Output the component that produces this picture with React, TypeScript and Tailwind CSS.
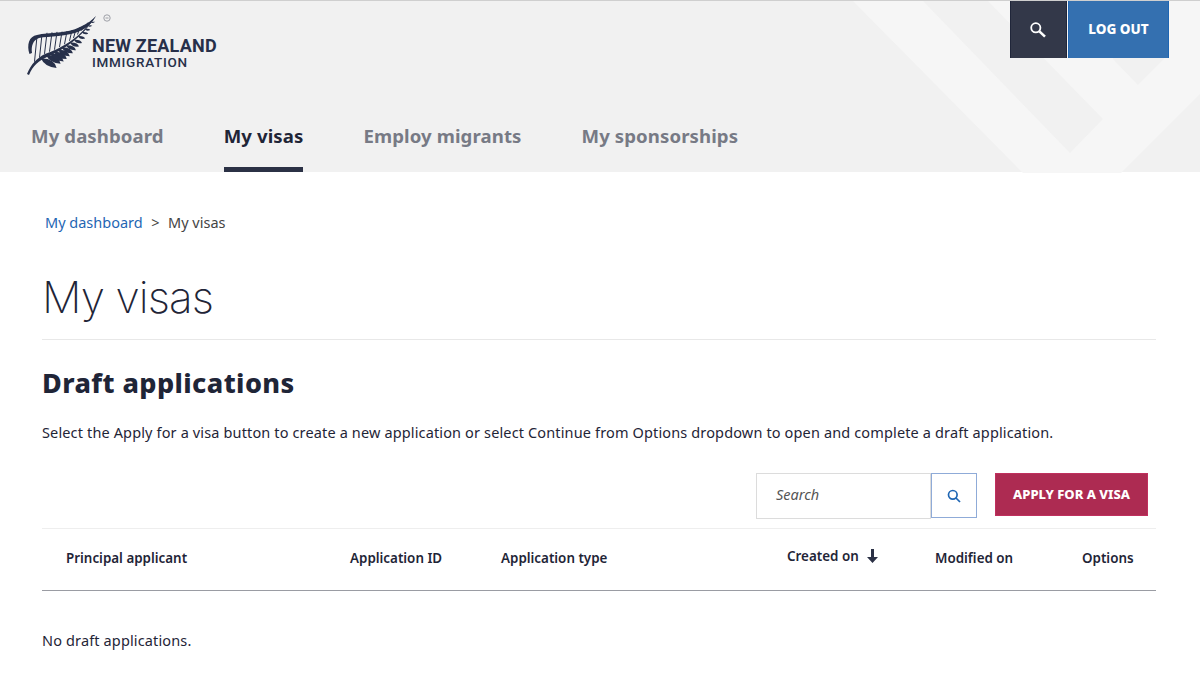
const navItems = [
  { label: 'My dashboard', active: false },
  { label: 'My visas', active: true },
  { label: 'Employ migrants', active: false },
  { label: 'My sponsorships', active: false },
];

function HeaderPattern() {
  return (
    <svg className="absolute inset-0 h-[172px] w-[1200px]" viewBox="0 0 1200 172" aria-hidden="true">
      <polygon
        fill="#f6f6f6"
        points="853,0 923,0 1070,152 1103,118 988,0 1200,0 1200,93 1121,172 1023,172"
      />
      <polygon fill="#f1f1f1" points="1113,58 1138,84 1164,58 1164,40 1113,40" />
    </svg>
  );
}

// rough curves of the fern, x -> y in the logo's own coordinates
const lerp = (pts: number[][], x: number) => {
  for (let i = 0; i < pts.length - 1; i++) {
    if (x <= pts[i + 1][0]) {
      const t = (x - pts[i][0]) / (pts[i + 1][0] - pts[i][0]);
      return pts[i][1] + (pts[i + 1][1] - pts[i][1]) * t;
    }
  }
  return pts[pts.length - 1][1];
};
const stem = [[3, 61], [10, 51], [20, 43.5], [30, 39.5], [40, 34], [50, 27], [60, 17], [71, 4]];
const arc = [[10, 25], [20, 21], [30, 20], [40, 19.5], [50, 17.5], [60, 13], [71, 4]];
const ribs = [12, 17, 22, 27, 32, 37, 42, 47, 51, 55, 59, 63];
const leaves = [16, 21, 25, 29, 33, 37, 41, 45, 49, 53, 57, 60, 63, 66];

function FernLogo() {
  return (
    <svg className="h-[65px] w-[88px] shrink-0" viewBox="0 0 88 65" aria-hidden="true">
      <path d="M2 62 C6 52 12 46 20 42 C34 37 52 29 71 4 C56 27 38 38 22 45 C14 49 8 53 4 63 Z" fill="#27304a" />
      <path d="M4.5 42 C1.5 33 4 24 12 23 C24 20 42 22 55 15 C62 12 67 8 71 4 C67 11 62 16 55 19 C42 25 24 24 14 26 C8 28 6 34 7 41 Z" fill="#27304a" />
      {ribs.map((x) => (
        <line
          key={x}
          x1={x}
          y1={lerp(arc, x)}
          x2={x - 2.5}
          y2={lerp(stem, Math.max(x - 2.5, 3)) - 2}
          stroke="#27304a"
          strokeWidth="1"
        />
      ))}
      {leaves.map((x, i) => {
        const y = lerp(stem, x);
        const len = Math.max(19 - i * 1.15, 5);
        const ex = x + len * 0.82;
        const ey = y + len * 0.5 - i * 0.2;
        return (
          <path
            key={x}
            d={`M${x} ${y} Q${x + len * 0.7} ${y - 0.5} ${ex} ${ey} Q${x + len * 0.2} ${y + len * 0.45} ${x} ${y} Z`}
            fill="#27304a"
          />
        );
      })}
      <circle cx="82" cy="6" r="3.2" fill="none" stroke="#8a8d96" strokeWidth="0.8" />
      <path d="M80.5 6 H83.5" stroke="#8a8d96" strokeWidth="0.8" />
    </svg>
  );
}

export default function App() {
  return (
    <div className="min-h-[687px] w-[1200px] overflow-hidden bg-white font-['Noto_Sans',sans-serif] text-[#1f2537]">
      <header className="relative h-[172px] border-t border-[#cfcfcf] bg-[#f1f1f1]">
        <HeaderPattern />
        <div className="relative flex h-[58px] items-start justify-between pr-[31px]">
          <div className="flex items-start pl-[25px] pt-[11px]">
            <FernLogo />
            <div className="-ml-[21px] pt-[25px] font-['Roboto',sans-serif] text-[#27304a]">
              <div className="text-[18px] leading-[18px] font-bold tracking-[0.2px]">NEW ZEALAND</div>
              <div className="text-[13.5px] leading-[15px] font-medium tracking-[0.7px]">IMMIGRATION</div>
            </div>
          </div>
          <div className="flex gap-px">
            <button className="flex h-[57px] w-[57px] items-center justify-center border-x border-[#20263a] bg-[#333849] pr-[2px]">
              <svg className="h-[18px] w-[18px]" viewBox="0 0 18 18" fill="none" stroke="#ffffff" aria-hidden="true">
                <circle cx="6.8" cy="6.8" r="4.6" strokeWidth="1.8" />
                <path d="M10.4 10.4 L16 15.6" strokeWidth="2.6" />
              </svg>
            </button>
            <button className="h-[57px] w-[101px] border-x border-[#1f66b3] bg-[#3470b0] text-[13.5px] font-extrabold text-white">LOG OUT</button>
          </div>
        </div>
        <nav className="relative mt-[54px] flex gap-[60px] pl-[31px]">
          {navItems.map((item) => (
            <a
              key={item.label}
              className={
                item.active
                  ? 'h-[59px] border-b-[5px] border-[#2b3145] pt-[9px] text-[18.6px] font-bold tracking-[0.1px] text-[#1f2537]'
                  : 'h-[59px] pt-[9px] text-[18.6px] font-bold tracking-[0.1px] text-[#777a85]'
              }
            >
              {item.label}
            </a>
          ))}
        </nav>
      </header>

      <main className="px-[42px]">
        <div className="flex gap-[8.5px] pl-[3px] pt-[40px] text-[14.5px] leading-[20px]">
          <a className="text-[#1f66b3]">My dashboard</a>
          <span className="text-[#444]">&gt;</span>
          <span className="text-[#444]">My visas</span>
        </div>

        <h1 className="mt-[38px] h-[70px] w-[1114px] border-b border-[#e8e8e8] pt-[2px] font-['Inter',sans-serif] text-[44px] leading-[50px] font-extralight tracking-[-0.9px] text-[#1f2537]">
          My visas
        </h1>

        <h2 className="mt-[23px] text-[27px] leading-[40px] font-extrabold tracking-[0.42px] text-[#1f2537]">Draft applications</h2>
        <p className="mt-[19px] text-[14.5px] leading-[20px] tracking-[0.14px] text-[#1f2537]">
          Select the Apply for a visa button to create a new application or select Continue from Options dropdown to open and complete a draft application.
        </p>

        <div className="mt-[31px] flex w-[1106px] items-start justify-end">
          <div className="flex h-[46px] w-[175px] items-center border border-[#dcdcdc] pb-[2px] pl-[19px] text-[14.5px] text-[#555] italic">Search</div>
          <button className="flex h-[45px] w-[46px] items-center justify-center border border-[#8fabd8] bg-white">
            <svg className="h-[14px] w-[14px]" viewBox="0 0 14 14" fill="none" stroke="#1f66b3" strokeWidth="1.7" aria-hidden="true">
              <circle cx="5.8" cy="5.8" r="4.3" />
              <path d="M9 9 L13 13" />
            </svg>
          </button>
          <button className="ml-[18px] h-[43px] w-[153px] border border-[#c0305e] bg-[#ad2b52] text-[13px] font-extrabold text-white">APPLY FOR A VISA</button>
        </div>

        <div className="mt-[9px] flex h-[63px] w-[1114px] items-center border-y border-t-[#eeeeee] border-b-[#9a9ca3] pb-[2px] text-[13.4px] font-semibold text-[#1f2537]">
          <span className="ml-[24px] w-[284px]">Principal applicant</span>
          <span className="w-[151px]">Application ID</span>
          <span className="w-[286px]">Application type</span>
          <span className="-mt-[5px] flex w-[148px] items-center gap-[8px]">
            Created on
            <svg className="h-[14px] w-[11px]" viewBox="0 0 11 14" fill="#2b3145" aria-hidden="true">
              <path d="M4 0 H7 V8 H11 L5.5 14 L0 8 H4 Z" />
            </svg>
          </span>
          <span className="w-[147px]">Modified on</span>
          <span>Options</span>
        </div>

        <p className="mt-[39px] text-[14.5px] leading-[20px] tracking-[0.14px]">No draft applications.</p>
      </main>
    </div>
  );
}
